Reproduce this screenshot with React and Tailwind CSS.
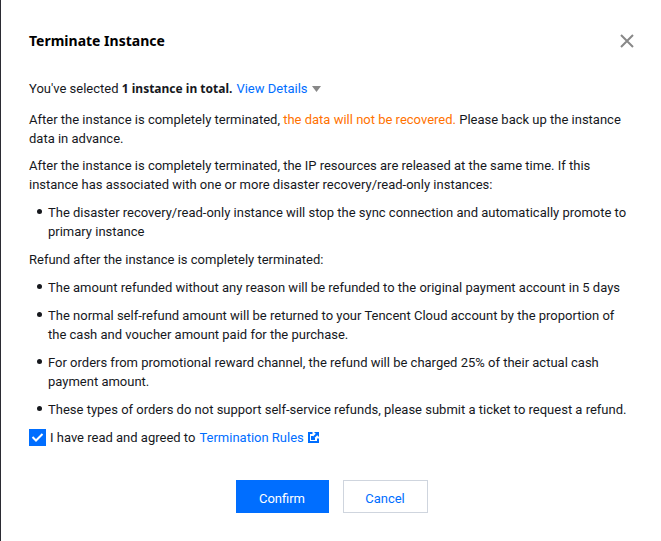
import React, { useState } from "react";

const syncNotes = [
    "The disaster recovery/read-only instance will stop the sync connection and automatically promote to primary instance",
];

const refundNotes = [
    "The amount refunded without any reason will be refunded to the original payment account in 5 days",
    "The normal self-refund amount will be returned to your Tencent Cloud account by the proportion of the cash and voucher amount paid for the purchase.",
    "For orders from promotional reward channel, the refund will be charged 25% of their actual cash payment amount.",
    "These types of orders do not support self-service refunds, please submit a ticket to request a refund.",
];

const CloseIcon = () => (
    <svg width="14" height="14" viewBox="0 0 14 14" fill="none" stroke="#888888" strokeWidth="2" aria-hidden="true">
        <path d="M1 1l12 12M13 1L1 13" />
    </svg>
);

const ExternalIcon = () => (
    <svg width="11" height="11" viewBox="0 0 11 11" fill="none" stroke="currentColor" strokeWidth="2" aria-hidden="true">
        <path d="M4.500 1H1v9h9V6.500" />
        <path d="M4 4v3h3M4 7l5-5" />
        <path d="M6 0h5v5z" fill="currentColor" stroke="none" />
    </svg>
);

const NoteList = ({ items }) => (
    <ul className="flex flex-col gap-[9px]">
        {items.map((item) => (
            <li key={item} className="flex">
                <span className="mt-[6px] mr-[6px] ml-2 size-[5px] shrink-0 rounded-full bg-[#16181d]" />
                <span>{item}</span>
            </li>
        ))}
    </ul>
);

const App = () => {
    const [agreed, setAgreed] = useState(true);

    return (
        <div
            role="dialog"
            aria-labelledby="dialog-title"
            className="min-h-screen border-l border-[#2b2b33] bg-white pt-[31px] pr-[27px] pb-7 pl-7 font-[Roboto,'Noto_Sans',sans-serif] text-[13px] leading-[19px] text-[#16181d]"
        >
            <header className="flex items-center justify-between">
                <h1 id="dialog-title" className="font-['Noto_Sans',sans-serif] text-[14px] font-bold text-black">
                    Terminate Instance
                </h1>
                <button type="button" aria-label="Close">
                    <CloseIcon />
                </button>
            </header>

            <main className="mt-[29px] flex flex-col gap-[9px]">
                <div className="mb-[3px] flex items-center gap-1">
                    <p>
                        You've selected{" "}
                        <strong className="font-['Noto_Sans',sans-serif] text-[12px]">1 instance in total.</strong>
                    </p>
                    <button type="button" className="flex items-center gap-1 text-[#006eff]">
                        View Details
                        <svg width="9" height="6" viewBox="0 0 9 6" fill="#888888" aria-hidden="true">
                            <path d="M0 0h9L4.500 6z" />
                        </svg>
                    </button>
                </div>

                <div className="flex flex-col gap-2">
                    <p>
                        After the instance is completely terminated,{" "}
                        <span className="text-[#ff7200]">the data will not be recovered.</span> Please back up the
                        instance data in advance.
                    </p>
                    <p>
                        After the instance is completely terminated, the IP resources are released at the same time. If
                        this instance has associated with one or more disaster recovery/read-only instances:
                    </p>
                </div>
                <NoteList items={syncNotes} />
                <p>Refund after the instance is completely terminated:</p>
                <NoteList items={refundNotes} />

                <div className="flex items-center gap-1">
                    <span className="relative flex size-[17px]">
                        <input
                            id="agree"
                            type="checkbox"
                            checked={agreed}
                            onChange={(e) => setAgreed(e.target.checked)}
                            className="size-[17px] appearance-none border border-[#006eff] checked:bg-[#006eff]"
                        />
                        {agreed && (
                            <svg
                                className="pointer-events-none absolute inset-0"
                                width="17"
                                height="17"
                                viewBox="0 0 17 17"
                                fill="none"
                                stroke="white"
                                strokeWidth="2"
                                aria-hidden="true"
                            >
                                <path d="M3.500 8l3.500 3.500L13.500 5" />
                            </svg>
                        )}
                    </span>
                    <label htmlFor="agree">I have read and agreed to</label>
                    <a href="#rules" className="flex items-center gap-1 text-[#006eff]">
                        Termination Rules
                        <ExternalIcon />
                    </a>
                </div>
            </main>

            <footer className="mt-[33px] flex justify-center gap-[14px]">
                <button type="button" className="h-[33px] w-[93px] bg-[#006eff] pt-1 text-white">
                    Confirm
                </button>
                <button type="button" className="h-[33px] w-[85px] border border-[#cfd5de] pt-1 text-[#006eff]">
                    Cancel
                </button>
            </footer>
        </div>
    );
};

export default App;
